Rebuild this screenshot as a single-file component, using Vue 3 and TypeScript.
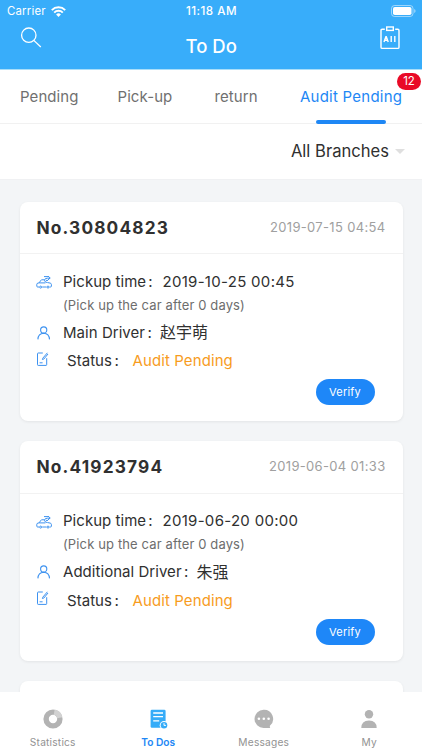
<script setup lang="ts">
interface Order {
  no: string
  created: string
  pickup: string
  role: string
  driver: string
}

const tabs: { label: string; cls: string; badge?: number }[] = [
  { label: 'Pending', cls: 'pending' },
  { label: 'Pick-up', cls: 'pickup' },
  { label: 'return', cls: 'return' },
  { label: 'Audit Pending', cls: 'audit', badge: 12 },
]

const orders: Order[] = [
  { no: '30804823', created: '2019-07-15 04:54', pickup: '2019-10-25 00:45', role: 'Main Driver', driver: '赵宇萌' },
  { no: '41923794', created: '2019-06-04 01:33', pickup: '2019-06-20 00:00', role: 'Additional Driver', driver: '朱强' },
]
</script>

<template>
  <div class="app">
    <header class="top">
      <div class="status">
        <span class="carrier">Carrier
          <svg width="15" height="11" viewBox="0 0 15 11" fill="none" stroke="#fff" stroke-width="2">
            <path d="M.8 4.1a9.5 9.5 0 0 1 13.4 0M3.2 6.6a6.1 6.1 0 0 1 8.6 0" />
            <path d="M7.5 11 5.1 8.5a3.4 3.4 0 0 1 4.8 0z" fill="#fff" stroke="none" />
          </svg>
        </span>
        <span class="clock">11:18 AM</span>
        <svg class="battery" width="25" height="12" viewBox="0 0 25 12">
          <rect x=".5" y=".5" width="21.5" height="11" rx="3" fill="none" stroke="#fff" stroke-opacity=".5" />
          <rect x="2" y="2" width="18.5" height="8" rx="1.8" fill="#fff" />
          <path d="M23.3 4v4q1.2-.6 1.2-2t-1.2-2" fill="#fff" fill-opacity=".6" />
        </svg>
      </div>
      <div class="bar">
        <svg class="search" width="22" height="22" viewBox="0 0 22 22" fill="none" stroke="#fff" stroke-width="1.3">
          <circle cx="8.8" cy="8.2" r="7.2" />
          <path d="m13.8 13.4 7 6.6" />
        </svg>
        <h1>To Do</h1>
        <svg class="all" width="20" height="24" viewBox="0 0 20 24" fill="none" stroke="#fff" stroke-width="1.4">
          <path d="M4.8 3.2H2.2Q1 3.2 1 4.4v16.8q0 1.2 1.2 1.2h15.6q1.2 0 1.2-1.2V4.4q0-1.2-1.2-1.2h-2.6" />
          <rect x="6.7" y="1" width="6.6" height="3.4" />
          <path d="m4 16 1.9-5.4h.4L8.2 16M4.8 14.3h2.6M11.2 10v6M14.8 10v6" stroke-width="1.4" />
        </svg>
      </div>
    </header>

    <nav class="tabs">
      <div v-for="t in tabs" :key="t.label" class="tab" :class="[t.cls, { on: t.badge }]">
        <span>{{ t.label }}</span>
        <b v-if="t.badge" class="badge">{{ t.badge }}</b>
      </div>
    </nav>

    <div class="filter">
      <span>All Branches</span>
      <i class="caret"></i>
    </div>

    <main class="list">
      <article v-for="o in orders" :key="o.no" class="card">
        <div class="head">
          <h2>No.{{ o.no }}</h2>
          <time>{{ o.created }}</time>
        </div>
        <div class="body">
          <div class="row time">
            <svg class="icon" width="17" height="14" viewBox="0 0 17 14" fill="none" stroke="#3d92f0" stroke-width="1">
              <path d="M3 12H1.6q-.8 0-.8-.9V9.3q0-1 1.2-1.2l1.2-.3 1.6-2.4q.4-.6 1-.6h2.6M6.2 12h4.2M13.6 12h.9q.9 0 .9-.9V9.6q0-1.2-1.2-1.5l-2.8-.6M3.2 7.9h6.2" />
              <path d="M11.2 7.6q-2.8-.5-2.7-2.5.2-1.9 3-1.9h2.6M12 1.1 14.2 3 12 4.9M8 1.6h4M10 5.4h2" />
              <circle cx="4.6" cy="12.1" r="1" />
              <circle cx="12" cy="12.1" r="1" />
            </svg>
            <span class="label">Pickup time</span><i class="colon">:</i><span class="when">{{ o.pickup }}</span>
          </div>
          <div class="row note">(Pick up the car after 0 days)</div>
          <div class="row driver">
            <svg class="icon" width="17" height="14" viewBox="0 0 17 14" fill="none" stroke="#3d92f0" stroke-width="1.1">
              <circle cx="7.7" cy="4" r="3.1" />
              <path d="M1.9 13.4q.3-5.9 5.8-6.1 5.5.2 5.8 6.1" />
            </svg>
            <span class="label">{{ o.role }}</span><i class="colon">:</i><span class="name">{{ o.driver }}</span>
          </div>
          <div class="row state">
            <svg class="icon" width="17" height="14" viewBox="0 0 17 14" fill="none" stroke="#3d92f0" stroke-width="1">
              <path d="M6.8 1H2.2q-.7 0-.7.7v11q0 .7.7.7H10q.7 0 .7-.7V6.2" />
              <path d="m6.6 6.4 4.8-5.6M7.9 7l4.1-5M6.6 6.4l-.2 1.1 1.5-.5M3.6 10.8h3" />
            </svg>
            <span class="label">Status</span><i class="colon">:</i><span class="value">Audit Pending</span>
          </div>
          <button class="verify">Verify</button>
        </div>
      </article>
      <article class="card"></article>
    </main>

    <footer class="dock">
      <div class="item">
        <svg width="20" height="20" viewBox="0 0 20 20" fill="none" stroke-width="5.4">
          <circle cx="10" cy="10" r="6.9" stroke="#b3b3b3" />
          <path d="M11.2 3.2a6.9 6.9 0 0 1 5.6 5.6" stroke="#d2d2d2" />
        </svg>
        <span>Statistics</span>
      </div>
      <div class="item on">
        <svg width="20" height="20" viewBox="0 0 20 20">
          <rect x="2.6" y=".8" width="15" height="18" rx="1.3" fill="#36acf8" />
          <path d="M5.2 4h9.8M5.2 7.7h9.8M5.2 11.8h6" stroke="#fff" stroke-width="1.3" />
          <circle cx="16" cy="16.2" r="4.3" fill="#fff" />
          <circle cx="16" cy="16.2" r="3.3" fill="#36acf8" />
          <path d="M16 14.2v2.2h1.9" fill="none" stroke="#fff" />
        </svg>
        <span>To Dos</span>
      </div>
      <div class="item">
        <svg width="20" height="20" viewBox="0 0 20 20">
          <path d="M9.6.8a9.1 9.1 0 1 0 0 18.2h6.6q-.5-1.1-.3-2.2A9.1 9.1 0 0 0 9.6.8" fill="#b3b3b3" />
          <g fill="#fff"><circle cx="4.9" cy="9.8" r="1.3" /><circle cx="9.8" cy="9.8" r="1.3" /><circle cx="14.6" cy="9.8" r="1.3" /></g>
        </svg>
        <span>Messages</span>
      </div>
      <div class="item">
        <svg width="20" height="20" viewBox="0 0 20 20" fill="#b3b3b3">
          <circle cx="10" cy="5.2" r="4.2" />
          <path d="M2.3 19q0-7.6 7.7-7.6t7.7 7.6z" />
        </svg>
        <span>My</span>
      </div>
    </footer>
  </div>
</template>

<style>
body { background: #f3f5f7; overflow: hidden; }
</style>

<style scoped>
.app {
  width: 422px;
  height: 750px;
  display: flex;
  flex-direction: column;
  overflow: hidden;
  background: #f3f5f7;
  color: #303030;
  font-family: Inter, "Noto Sans CJK SC", sans-serif;
  white-space: nowrap;
}
svg { display: block; flex: none; }
i { font-style: normal; }
.top { flex: none; height: 70px; box-sizing: border-box; background: #38adfa; color: #fff; border-bottom: 1px solid #a9def9; }
.status { height: 22px; display: grid; grid-template-columns: 1fr 1fr 1fr; align-items: center; padding: 0 6px 0 7px; }
.carrier { display: flex; align-items: center; gap: 5px; font-size: 11.4px; letter-spacing: .2px; }
.clock { text-align: center; font-size: 11.6px; font-weight: 500; letter-spacing: .5px; }
.battery { justify-self: end; }
.bar { display: flex; justify-content: space-between; padding: 3px 21.5px 0 20px; }
.search { margin-top: 2px; }
.all { margin-top: .5px; }
.bar h1 { margin: 8px 0 0; font-size: 18.5px; line-height: 26px; font-weight: 500; letter-spacing: 0; }
.tabs { flex: none; height: 54px; box-sizing: border-box; display: flex; padding-left: 20px; background: #fff; border-bottom: 1px solid #f1f1f1; font-size: 15px; color: #707070; }
.tab { position: relative; line-height: 54px; letter-spacing: .08px; }
.pending { width: 97.5px; }
.pickup { width: 97px; }
.return { width: 85.5px; }
.audit { width: 102px; letter-spacing: .24px; }
.on { color: #1e87f5; }
.tab.on::after { content: ""; position: absolute; left: 15.5px; right: 16px; bottom: -1px; height: 4px; border-radius: 2px; background: #1e87f5; }
.badge { position: absolute; left: 97px; top: 3px; width: 24px; height: 17px; border-radius: 9px; background: #e90a26; color: #fff; font-size: 11.5px; line-height: 17px; font-weight: 400; letter-spacing: 0; text-align: center; }
.filter { flex: none; height: 56px; box-sizing: border-box; display: flex; align-items: center; justify-content: flex-end; gap: 6px; padding: 0 17px 2px 0; background: #fff; border-bottom: 1px solid #f0f1f3; font-size: 16.6px; }
.caret { border: 5px solid transparent; border-top-color: #dfdfdf; border-bottom: 0; margin-top: 1px; }
.list { flex: 1; overflow: hidden; padding: 21.5px 19.5px 0; }
.card { height: 219.5px; margin-bottom: 20px; border-radius: 8px; background: #fff; box-shadow: 0 1px 3px rgba(0, 0, 0, .07); }
.head { height: 52.5px; box-sizing: border-box; display: flex; align-items: center; justify-content: space-between; padding: 0 17px; border-bottom: 1px solid #f2f2f2; }
.head h2 { margin: 0; font-size: 17.3px; font-weight: 700; letter-spacing: 1.15px; }
.head time { font-size: 13px; color: #a0a0a0; letter-spacing: .33px; padding-bottom: 1px; }
.body { display: flex; flex-direction: column; padding: 14.5px 28px 0 16.5px; }
.row { display: flex; align-items: center; height: 25px; font-size: 15px; }
.icon { margin-right: 10px; }
.row.note { height: 22px; padding-left: 27px; font-size: 13px; letter-spacing: .13px; color: #6d6d6d; }
.row.driver { height: 26px; margin-top: 3.5px; }
.row.state { height: 27px; margin-top: 2px; }
.label { letter-spacing: .04px; }
.time .icon { margin-top: 2px; }
.driver .icon { margin-top: 1px; }
.state .icon { margin: -4px 14px 0 0; }
.colon { width: 15px; padding-left: 2.5px; box-sizing: border-box; }
.time .colon { width: 16.3px; padding-left: 2px; }
.when { letter-spacing: .3px; }
.name { font-size: 16px; margin-top: -2px; }
.state .colon { width: 20.5px; }
.value { letter-spacing: .1px; color: #f79c1e; }
.verify { align-self: flex-end; width: 59px; height: 26px; margin-top: 5px; padding: 0; border: 0; border-radius: 13px; background: #1e87f8; color: #fff; font: 11px Inter, sans-serif; letter-spacing: .2px; }
.dock { flex: none; height: 58.5px; display: flex; background: #fff; }
.item { flex: 1; display: flex; flex-direction: column; align-items: center; padding-top: 17px; font-size: 10.2px; letter-spacing: .2px; color: #929292; }
.item span { margin-top: 6px; line-height: 14px; }
.item.on { color: #1e87f5; font-weight: 600; letter-spacing: 0; }
</style>
